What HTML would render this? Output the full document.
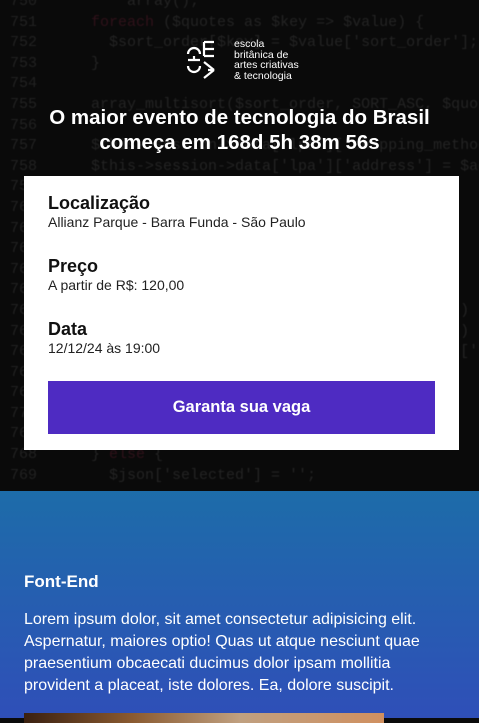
<!DOCTYPE html>
<html><head><meta charset="utf-8"><style>
*{margin:0;padding:0;box-sizing:border-box}
body{width:479px;height:718px;overflow:hidden;font-family:"Liberation Sans",sans-serif;background:#0b0b0b;position:relative}
.hero{position:absolute;left:0;top:0;width:479px;height:491px;background:#0a0a0a;overflow:hidden}
.code{position:absolute;left:10px;top:-8px;font-family:"Liberation Mono",monospace;font-size:15px;line-height:20.6px;color:#242424;white-space:pre;filter:blur(0.6px)}
.code .n{color:#222}
.code .r{color:#30121a}
.logo{position:absolute;left:186px;top:39px;display:flex;align-items:center;gap:8px}
.logo .t{color:#fff;font-size:10.5px;line-height:10.5px}
h1{position:absolute;top:105px;left:0;width:479px;text-align:center;color:#fff;font-size:20.5px;line-height:25px;font-weight:bold}
.card{position:absolute;left:24px;top:176px;width:435px;height:274px;background:#fff;padding:16px 24px}
.card h3{font-size:18px;font-weight:bold;color:#111;line-height:22px}
.card p{font-size:14px;color:#222;line-height:17px;margin-bottom:24px}
.btn{position:absolute;left:24px;top:205px;width:387px;height:53px;background:#4e2bc2;color:#fff;font-weight:bold;font-size:16.5px;text-align:center;line-height:53px}
.blue{position:absolute;left:0;top:491px;width:479px;height:227px;background:linear-gradient(#1d6ca9,#2f4fb8)}
.blue h2{position:absolute;left:24px;top:81px;color:#fff;font-size:17px;font-weight:bold}
.blue p{position:absolute;left:24px;top:118px;width:425px;color:#fff;font-size:16px;line-height:22px}
.img{position:absolute;left:24px;top:222px;width:360px;height:10px;background:linear-gradient(90deg,#3a2010,#8a5a30 30%,#c0a080 60%,#d09060)}
</style></head><body>
<div class="hero"><div class="code"><span class="n">750</span>          array();
<span class="n">751</span>      <span class="r">foreach</span> ($quotes as $key => $value) {
<span class="n">752</span>        $sort_order[$key] = $value['sort_order'];
<span class="n">753</span>      }
<span class="n">754</span>
<span class="n">755</span>      array_multisort($sort_order, SORT_ASC, $quotes);
<span class="n">756</span>
<span class="n">757</span>      $this->session->data['lpa']['shipping_methods'] = $quotes;
<span class="n">758</span>      $this->session->data['lpa']['address'] = $address;
<span class="n">759</span>
<span class="n">760</span>
<span class="n">761</span>
<span class="n">762</span>
<span class="n">763</span>
<span class="n">764</span>
<span class="n">765</span>                                              ])
<span class="n">766</span>                                              ])
<span class="n">767</span>                                              ]['
<span class="n">768</span>
<span class="n">769</span>
<span class="n">770</span>
<span class="n">767</span>           ]['shipping_method']['code'];
<span class="n">768</span>      } <span class="r">else</span> {
<span class="n">769</span>        $json['selected'] = '';
</div>
<div class="logo"><svg width="40" height="40" viewBox="0 0 40 40" fill="none" stroke="#fff" stroke-width="2.2"><path d="M2 14a6 6 0 0 1 12 0"/><path d="M2 26a6 6 0 0 0 12 0"/><path d="M18 2v14M18 9h10M18 16h10M18 2h10"/><path d="M2 20h12M8 20v-4"/><path d="M18 38l10-8M18 22l10 8M22 30h6"/></svg><div class="t">escola<br>britânica de<br>artes criativas<br>&amp; tecnologia</div></div>
<h1>O maior evento de tecnologia do Brasil<br>começa em 168d 5h 38m 56s</h1>
<div class="card">
<h3>Localização</h3><p>Allianz Parque - Barra Funda - São Paulo</p>
<h3>Preço</h3><p>A partir de R$: 120,00</p>
<h3>Data</h3><p>12/12/24 às 19:00</p>
<div class="btn">Garanta sua vaga</div>
</div>
</div>
<div class="blue"><h2>Font-End</h2><p>Lorem ipsum dolor, sit amet consectetur adipisicing elit. Aspernatur, maiores optio! Quas ut atque nesciunt quae praesentium obcaecati ducimus dolor ipsam mollitia provident a placeat, iste dolores. Ea, dolore suscipit.</p><div class="img"></div></div>
</body></html>
